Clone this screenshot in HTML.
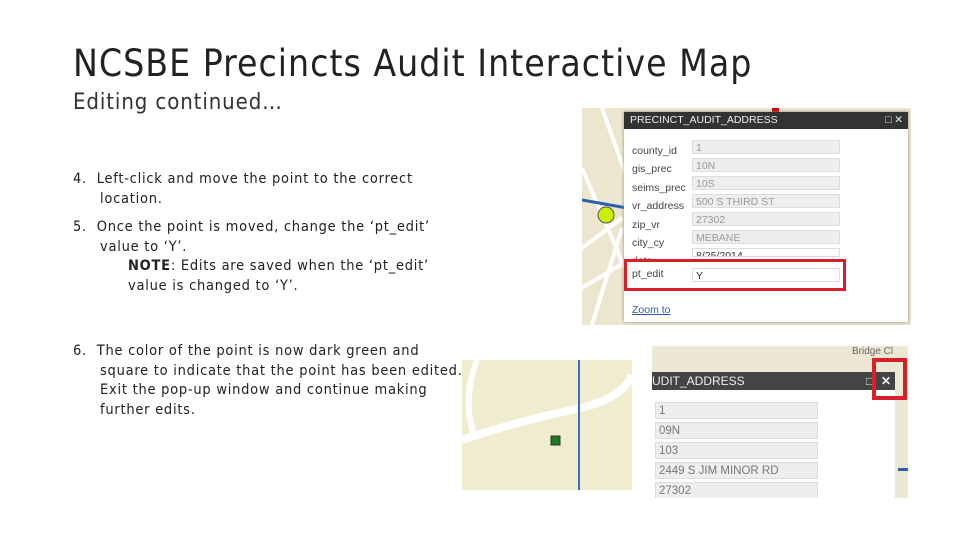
<!DOCTYPE html>
<html><head><meta charset="utf-8"><style>
body{margin:0;width:960px;height:540px;background:#fff;position:relative;overflow:hidden;font-family:"Liberation Sans",sans-serif}
.a{position:absolute}
h1{position:absolute;left:73px;top:42px;margin:0;font-weight:normal;font-size:37px;color:#222;font-family:"DejaVu Sans Condensed","Liberation Sans",sans-serif;letter-spacing:1px;white-space:nowrap}
.sub{left:73px;top:90px;font-size:22px;color:#333;font-family:"DejaVu Sans Condensed","Liberation Sans",sans-serif;letter-spacing:0.9px}
.t{font-size:14.5px;color:#222;line-height:19.5px;font-family:"DejaVu Sans Condensed","Liberation Sans",sans-serif;letter-spacing:0.75px;white-space:nowrap}
.lb{font-size:10.5px;color:#444}
.in{background:#eee;border:1px solid #ddd;color:#999;font-size:10.5px;height:14px;line-height:14px;padding-left:3px;box-sizing:border-box}
</style></head><body>
<h1>NCSBE Precincts Audit Interactive Map</h1>
<div class="a sub">Editing continued…</div>
<div class="a t" style="left:73px;top:170px;width:380px">4.&nbsp; Left-click and move the point to the correct<br><span style="padding-left:27px">location.</span></div>
<div class="a t" style="left:73px;top:218px;width:380px">5.&nbsp; Once the point is moved, change the ‘pt_edit’<br><span style="padding-left:27px">value to ‘Y’.</span><br><span style="padding-left:55px"><b>NOTE</b>: Edits are saved when the ‘pt_edit’</span><br><span style="padding-left:55px">value is changed to ‘Y’.</span></div>
<div class="a t" style="left:73px;top:342px;width:400px">6.&nbsp; The color of the point is now dark green and<br><span style="padding-left:27px">square to indicate that the point has been edited.</span><br><span style="padding-left:27px">Exit the pop-up window and continue making</span><br><span style="padding-left:27px">further edits.</span></div>

<!-- map 1 -->
<div class="a" style="left:582px;top:108px;width:329px;height:217px;background:#ece6cf;overflow:hidden">
<svg width="329" height="217" class="a" style="left:0;top:0"><g stroke="#fff" stroke-width="4" fill="none"><path d="M0 60 L60 200"/><path d="M20 0 L45 70"/><path d="M0 140 L40 110"/><path d="M0 180 L50 150"/><path d="M10 217 L40 120"/></g><path d="M0 92 L45 100" stroke="#2a5fb0" stroke-width="3"/><circle cx="24" cy="107" r="8" fill="#c8f000" stroke="#555"/><rect x="190" y="0" width="7" height="6" fill="#c00"/></svg>
<div class="a" style="left:42px;top:4px;width:284px;height:210px;background:#fff;box-shadow:0 0 3px #888">
<div style="background:#333;color:#eee;height:17px;font-size:10.5px;line-height:17px;padding-left:6px">PRECINCT_AUDIT_ADDRESS<span style="float:right;margin-right:5px">□ ✕</span></div>
</div>
</div>
<div class="a lb" style="left:632px;top:142px;line-height:18.4px">county_id<br>gis_prec<br>seims_prec<br>vr_address<br>zip_vr<br>city_cy<br>date</div>
<div class="a" style="left:692px;top:140px;width:148px">
<div class="in" style="margin-bottom:4px">1</div><div class="in" style="margin-bottom:4px">10N</div><div class="in" style="margin-bottom:4px">10S</div><div class="in" style="margin-bottom:4px">500 S THIRD ST</div><div class="in" style="margin-bottom:4px">27302</div><div class="in" style="margin-bottom:4px">MEBANE</div><div class="in" style="background:#fff;color:#333;height:9px;overflow:hidden">8/25/2014</div></div>
<div class="a" style="left:624px;top:259px;width:222px;height:32px;border:3px solid #d9202a;box-sizing:border-box;background:#fff"></div>
<div class="a lb" style="left:632px;top:268px">pt_edit</div>
<div class="a in" style="left:692px;top:268px;width:148px;background:#fff;color:#333">Y</div>
<div class="a" style="left:632px;top:304px;font-size:10.5px;color:#2a5fb0;text-decoration:underline">Zoom to</div>

<!-- map 2 -->
<div class="a" style="left:462px;top:360px;width:170px;height:130px;background:#f0ecd0;overflow:hidden">
<svg width="170" height="130"><path d="M0 80 Q60 60 110 50 T170 15" stroke="#fff" stroke-width="8" fill="none"/><path d="M15 0 Q0 40 12 75" stroke="#fff" stroke-width="6" fill="none"/><path d="M117 0 V130" stroke="#3a6fc0" stroke-width="2"/><rect x="89" y="76" width="9" height="9" fill="#1a7a1a" stroke="#333"/></svg></div>

<!-- map 3 -->
<div class="a" style="left:652px;top:346px;width:256px;height:152px;background:#ede8d3;overflow:hidden">
<div class="a" style="left:200px;top:0;font-size:10px;color:#666">Bridge Cl</div>
<div class="a" style="left:0;top:26px;width:243px;height:130px;background:#fff"></div>
<div class="a" style="left:0;top:26px;width:243px;height:18px;background:#444;color:#eee;font-size:12px;line-height:18px">UDIT_ADDRESS<span style="position:absolute;left:214px">□</span><span style="position:absolute;left:229px;font-weight:bold">✕</span></div>
<div class="a" style="left:3px;top:56px;width:163px">
<div class="in" style="height:17px;line-height:17px;font-size:11.5px;margin-bottom:3px;color:#777">1</div><div class="in" style="height:17px;line-height:17px;font-size:11.5px;margin-bottom:3px;color:#777">09N</div><div class="in" style="height:17px;line-height:17px;font-size:11.5px;margin-bottom:3px;color:#777">103</div><div class="in" style="height:17px;line-height:17px;font-size:11.5px;margin-bottom:3px;color:#777">2449 S JIM MINOR RD</div><div class="in" style="height:17px;line-height:17px;font-size:11.5px;color:#777">27302</div></div>
<div class="a" style="left:246px;top:122px;width:10px;height:3px;background:#2a5fb0"></div>
</div>
<div class="a" style="left:872px;top:358px;width:35px;height:42px;border:4px solid #d9202a;box-sizing:border-box"></div>
</body></html>
